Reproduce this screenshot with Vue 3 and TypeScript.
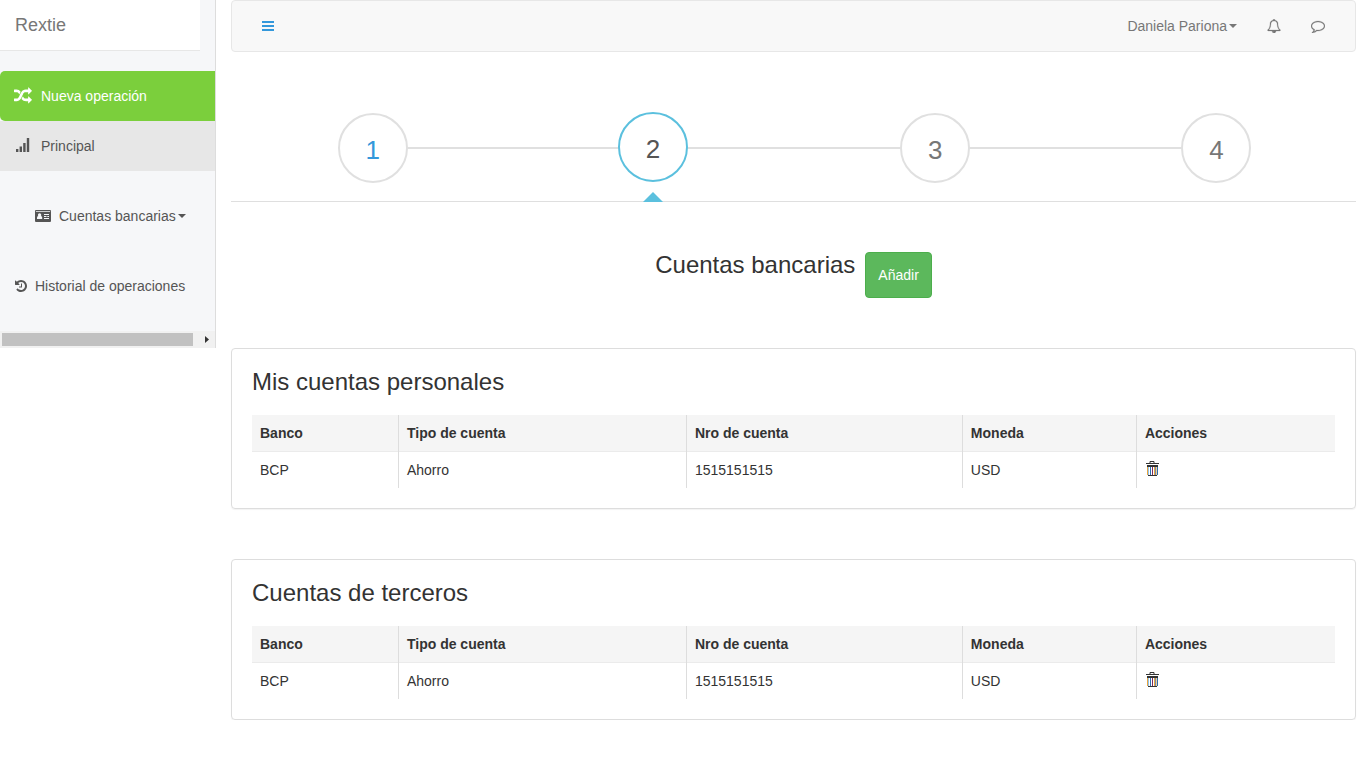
<script setup lang="ts">
interface Account {
  bank: string
  type: string
  number: string
  currency: string
}

interface AccountGroup {
  title: string
  accounts: Account[]
}

const steps: number[] = [1, 2, 3, 4]
const currentStep = 2

const groups: AccountGroup[] = [
  {
    title: 'Mis cuentas personales',
    accounts: [{ bank: 'BCP', type: 'Ahorro', number: '1515151515', currency: 'USD' }],
  },
  {
    title: 'Cuentas de terceros',
    accounts: [{ bank: 'BCP', type: 'Ahorro', number: '1515151515', currency: 'USD' }],
  },
]
</script>

<template>
  <div class="layout">
    <aside class="sidebar">
      <a class="brand" href="#">Rextie</a>
      <nav class="menu">
        <a class="item new" href="#">
          <svg class="icon-random" viewBox="0 0 1792 1792" aria-hidden="true"><path fill="currentColor" d="M666 481q-60 92-137 273-22-45-37-72.5t-40.5-63.5-51-56.5-63-35-81.5-14.5h-224q-14 0-23-9t-9-23v-192q0-14 9-23t23-9h224q250 0 410 225zm1126 799q0 14-9 23l-320 320q-9 9-23 9-13 0-22.5-9.5t-9.5-22.5v-192q-32 0-85 .5t-81 1-73-1-71-5-64-10.5-63-18.5-58-28.5-59-40-55-53.5-56-69.5q59-93 136-273 22 45 37 72.5t40.5 63.5 51 56.5 63 35 81.5 14.5h256v-192q0-14 9-23t23-9q12 0 24 10l319 319q9 9 9 23zm0-896q0 14-9 23l-320 320q-9 9-23 9-13 0-22.5-9.5t-9.5-22.5v-192h-256q-48 0-87 15t-69 45-51 61.5-45 77.5q-32 62-78 171-29 66-49.5 111t-54 105-64 100-74 83-90 68.5-106.5 42-128 16.5h-224q-14 0-23-9t-9-23v-192q0-14 9-23t23-9h224q48 0 87-15t69-45 51-61.5 45-77.5q32-62 78-171 29-66 49.5-111t54-105 64-100 74-83 90-68.5 106.5-42 128-16.5h256v-192q0-14 9-23t23-9q12 0 24 10l319 319q9 9 9 23z" /></svg>
          <span>Nueva operación</span>
        </a>
        <a class="item main" href="#">
          <svg class="icon-signal" viewBox="0 0 18 18" aria-hidden="true"><path fill="currentColor" d="M2 12h2.400v3H2zM5.600 9.500H8V15H5.600zM9.200 6h2.400v9H9.200zM12.800 1h2.400v14h-2.400z" /></svg>
          <span>Principal</span>
        </a>
        <button class="item accounts" type="button">
          <svg class="icon-card" viewBox="0 0 16 12" aria-hidden="true">
            <path fill="currentColor" fill-rule="evenodd" d="M1 0h14a1 1 0 0 1 1 1v10a1 1 0 0 1-1 1H1a1 1 0 0 1-1-1V1a1 1 0 0 1 1-1zM.9 1.2v.9h14.2v-.9zM2 9h5.2V7.8q0-1.5-1.3-1.8.4-.5.4-1.1a1.7 1.7 0 0 0-3.4 0q0 .6.4 1.1Q2 6.300 2 7.800zM9 4v1h5V4zM9 6v1h2.500V6zM12.300 6v1H14V6zM9 8v1h5V8z" />
          </svg>
          <span>Cuentas bancarias</span><i class="caret"></i>
        </button>
        <a class="item history" href="#">
          <svg class="icon-history" viewBox="128 0 1536 1792" aria-hidden="true"><path fill="currentColor" d="M1664 896q0 156-61 298t-164 245-245 164-298 61q-172 0-327-72.5t-264-204.5q-7-10-6.5-22.5t8.500-20.500l137-138q10-9 25-9 16 2 23 12 73 95 179 147t225 52q104 0 198.500-40.500t163.500-109.500 109.500-163.500 40.500-198.500-40.500-198.500-109.500-163.500-163.500-109.500-198.500-40.500q-98 0-188 35.500t-160 101.500l137 138q31 30 14 69-17 40-59 40h-448q-26 0-45-19t-19-45v-448q0-42 40-59 39-17 69 14l130 129q107-101 244.500-156.500t284.500-55.500q156 0 298 61t245 164 164 245 61 298zm-640-288v448q0 14-9 23t-23 9h-320q-14 0-23-9t-9-23v-64q0-14 9-23t23-9h224v-352q0-14 9-23t23-9h64q14 0 23 9t9 23z" /></svg>
          <span>Historial de operaciones</span>
        </a>
      </nav>
      <div class="scrollbar" aria-hidden="true">
        <div class="thumb"></div>
        <svg class="arrow" viewBox="0 0 17 17"><path fill="#333" d="M7 5v7l4-3.500z" /></svg>
      </div>
    </aside>

    <main class="content">
      <header class="topbar">
        <button class="toggle" type="button" aria-label="Menú">
          <svg class="icon-bars" viewBox="0 0 12 10" aria-hidden="true"><path fill="currentColor" d="M0 0h12v2H0zM0 4h12v2H0zM0 8h12v2H0z" /></svg>
        </button>
        <div class="tools">
          <button class="user" type="button"><span>Daniela Pariona</span><i class="caret"></i></button>
          <button type="button" aria-label="Notificaciones">
            <svg class="icon-tool" viewBox="0 0 1792 1792" aria-hidden="true"><path fill="currentColor" stroke="currentColor" stroke-width="30" d="M912 1696q0-16-16-16-59 0-101.500-42.500t-42.500-101.500q0-16-16-16t-16 16q0 73 51.500 124.500t124.500 51.500q16 0 16-16zm-666-288h1300q-266-300-266-832 0-51-24-105t-69-103-121.500-80.500-169.500-31.500-169.500 31.500-121.500 80.500-69 103-24 105q0 532-266 832zm1482 0q0 52-38 90t-90 38h-448q0 106-75 181t-181 75-181-75-75-181h-448q-52 0-90-38t-38-90q50-42 91-88t85-119.500 74.500-158.500 50-206 19.500-260q0-152 117-282.500t307-158.500q-8-19-8-39 0-40 28-68t68-28 68 28 28 68q0 20-8 39 190 28 307 158.500t117 282.500q0 139 19.500 260t50 206 74.500 158.500 85 119.500 91 88z" /></svg>
          </button>
          <button type="button" aria-label="Mensajes">
            <svg class="icon-tool" viewBox="0 0 1792 1792" aria-hidden="true"><path fill="currentColor" stroke="currentColor" stroke-width="30" d="M896 384q-204 0-381.500 69.500t-282 187.500-104.500 255q0 112 71.500 213.500t201.500 175.500l87 50-27 96q-24 91-70 172 152-63 275-171l43-38 57 6q69 8 130 8 204 0 381.500-69.500t282-187.500 104.500-255-104.500-255-282-187.500-381.500-69.500zm896 512q0 174-120 321.500t-326 233-450 85.500q-70 0-145-8-198 175-460 242-49 14-114 22h-5q-15 0-27-10.500t-16-27.500v-1q-3-4-.5-12t2-10 4.500-9.500l6-9 7-8.500 8-9q7-8 31-34.500t34.500-38 31-39.500 32.500-51 27-59 26-76q-157-89-247.500-220t-90.500-281q0-174 120-321.500t326-233 450-85.500 450 85.500 326 233 120 321.500z" /></svg>
          </button>
        </div>
      </header>

      <ol class="steps">
        <li
          v-for="step in steps"
          :key="step"
          class="step"
          :class="{ active: step === currentStep, done: step < currentStep }"
        >
          <a class="circle" href="#" :aria-current="step === currentStep ? 'step' : undefined">{{ step }}</a>
        </li>
      </ol>

      <div class="heading">
        <h1>Cuentas bancarias</h1>
        <button class="add" type="button">Añadir</button>
      </div>

      <section v-for="group in groups" :key="group.title" class="panel">
        <h2>{{ group.title }}</h2>
        <table>
          <colgroup>
            <col class="c-bank" />
            <col class="c-type" />
            <col class="c-number" />
            <col class="c-currency" />
            <col />
          </colgroup>
          <thead>
            <tr>
              <th scope="col">Banco</th>
              <th scope="col">Tipo de cuenta</th>
              <th scope="col">Nro de cuenta</th>
              <th scope="col">Moneda</th>
              <th scope="col">Acciones</th>
            </tr>
          </thead>
          <tbody>
            <tr v-for="account in group.accounts" :key="account.number">
              <td>{{ account.bank }}</td>
              <td>{{ account.type }}</td>
              <td>{{ account.number }}</td>
              <td>{{ account.currency }}</td>
              <td>
                <button class="delete" type="button" aria-label="Eliminar">
                  <svg class="icon-trash" viewBox="0 0 15 18" aria-hidden="true">
                    <path fill="none" stroke="#333" d="M5 2V.5h4V2" />
                    <path fill="#333" d="M1 2h13v1H1zM2 4h11v2H2zM3 14h9v1H3z" />
                    <path fill="#e8a33d" d="M2 6h1v8H2zM9 6h1v8H9z" />
                    <path fill="#f6cd91" d="M11 6h1v8h-1z" />
                    <path fill="#8cc4f0" d="M3 6h1v8H3z" />
                    <path fill="#2f6fb0" d="M5 6h1v8H5zM12 6h1v8h-1z" />
                    <path fill="#7d2c5e" d="M7 6h1v8H7z" />
                    <path fill="#6d8fb0" d="M10 6h1v8h-1z" />
                  </svg>
                </button>
              </td>
            </tr>
          </tbody>
        </table>
      </section>
    </main>
  </div>
</template>

<style>
body {
  margin: 0;
  background: #fff;
}
</style>

<style scoped>
.layout {
  display: flex;
  align-items: flex-start;
  font-family: "Liberation Sans", Arial, sans-serif;
  font-size: 14px;
  line-height: 20px;
  color: #333;
}

.layout * {
  box-sizing: border-box;
}

a {
  color: inherit;
  text-decoration: none;
}

button {
  margin: 0;
  padding: 0;
  border: 0;
  background: none;
  font: inherit;
  color: inherit;
  cursor: pointer;
}

svg {
  display: block;
  flex: none;
}

.caret {
  flex: none;
  margin-left: 2px;
  border-top: 4px solid currentColor;
  border-right: 4px solid transparent;
  border-left: 4px solid transparent;
}

.sidebar {
  flex: none;
  width: 216px;
  background: #f6f7f9;
  border-right: 1px solid #ddd;
}

.brand {
  display: block;
  width: 200px;
  padding: 15px;
  background: #fff;
  border-bottom: 1px solid #e7e7e7;
  font-size: 18px;
  color: #777;
}

.menu {
  display: flex;
  flex-direction: column;
  padding: 20px 0;
  color: #555;
}

.item {
  display: flex;
  align-items: center;
  height: 50px;
  padding: 0 14px;
}

.new {
  background: #7bcf3c;
  border-radius: 5px 0 0 5px;
  color: #fff;
}

.main {
  background: #e7e7e7;
}

.new,
.main {
  gap: 9px;
}

.icon-random,
.icon-signal {
  width: 18px;
  height: 18px;
}

.accounts {
  margin: 20px 0;
  padding-left: 35px;
}

.icon-card {
  width: 16px;
  height: 12px;
  margin-right: 8px;
}

.history {
  gap: 8px;
  padding-left: 15px;
}

.icon-history {
  width: 12px;
  height: 14px;
}

.scrollbar {
  display: flex;
  height: 17px;
  padding-left: 2px;
  background: #f1f1f1;
  align-items: center;
}

.thumb {
  flex: 1;
  height: 13px;
  margin-right: 5px;
  background: #c1c1c1;
}

.arrow {
  width: 17px;
  height: 17px;
}

.content {
  flex: 1;
  min-width: 0;
  padding: 0 15px;
}

.topbar {
  display: flex;
  align-items: center;
  justify-content: space-between;
  height: 52px;
  padding: 0 30px;
  background: #f8f8f8;
  border: 1px solid #e7e7e7;
  border-radius: 4px;
  color: #777;
}

.toggle {
  color: #3498db;
}

.icon-bars {
  width: 12px;
  height: 10px;
}

.tools {
  display: flex;
  align-items: center;
  gap: 30px;
}

.user {
  display: flex;
  align-items: center;
}

.icon-tool {
  width: 14px;
  height: 14px;
}

.steps {
  display: flex;
  height: 150px;
  margin: 0;
  padding: 60px 0 0;
  list-style: none;
  border-bottom: 1px solid #dfdfdf;
}

.step {
  position: relative;
  flex: 1 1 25%;
  display: flex;
  justify-content: center;
  align-items: flex-start;
  padding: 1px 0 0 2px;
}

.step.active {
  padding: 0;
}

/* Connector running from this circle to the next one */
.step:not(:last-child)::before {
  content: "";
  position: absolute;
  top: 35px;
  left: 50%;
  width: 100%;
  height: 2px;
  background: #e0e0e0;
}

.circle {
  position: relative;
  z-index: 1;
  width: 70px;
  height: 70px;
  border: 2px solid #e0e0e0;
  border-radius: 50%;
  background: #fff;
  font-size: 26px;
  line-height: 70px;
  text-align: center;
  color: #777;
}

.done .circle {
  color: #3498db;
}

.active .circle {
  border-color: #5bc0de;
  color: #555;
}

.step.active::after {
  content: "";
  position: absolute;
  bottom: -1px;
  left: 50%;
  margin-left: -10px;
  border: 10px solid transparent;
  border-top: 0;
  border-bottom-color: #5bc0de;
}

.heading {
  display: flex;
  justify-content: center;
  align-items: flex-start;
  gap: 10px;
  padding: 50px 0;
}

h1,
h2 {
  margin: 0;
  font-size: 24px;
  line-height: 26px;
  font-weight: 400;
}

.add {
  padding: 12px;
  background: #5cb85c;
  border: 1px solid #4cae4c;
  border-radius: 4px;
  color: #fff;
}

.panel {
  margin-bottom: 50px;
  padding: 20px;
  border: 1px solid #ddd;
  border-radius: 4px;
  box-shadow: 0 1px 1px rgba(0, 0, 0, 0.05);
}

.panel:last-child {
  margin-bottom: 0;
}

table {
  width: 100%;
  margin-top: 20px;
  border-spacing: 0;
  table-layout: fixed;
}

.c-bank {
  width: 13.57%;
}

.c-type {
  width: 26.59%;
}

.c-number {
  width: 25.48%;
}

.c-currency {
  width: 16.07%;
}

th,
td {
  padding: 8px;
  border-right: 1px solid #ddd;
  text-align: left;
}

th:last-child,
td:last-child {
  border-right: 0;
}

th {
  height: 37px;
  background: #f5f5f5;
  box-shadow: inset 0 -1px #ebebeb;
  vertical-align: top;
}

td {
  height: 36px;
}

.delete {
  display: block;
}

.icon-trash {
  width: 15px;
  height: 18px;
}
</style>
